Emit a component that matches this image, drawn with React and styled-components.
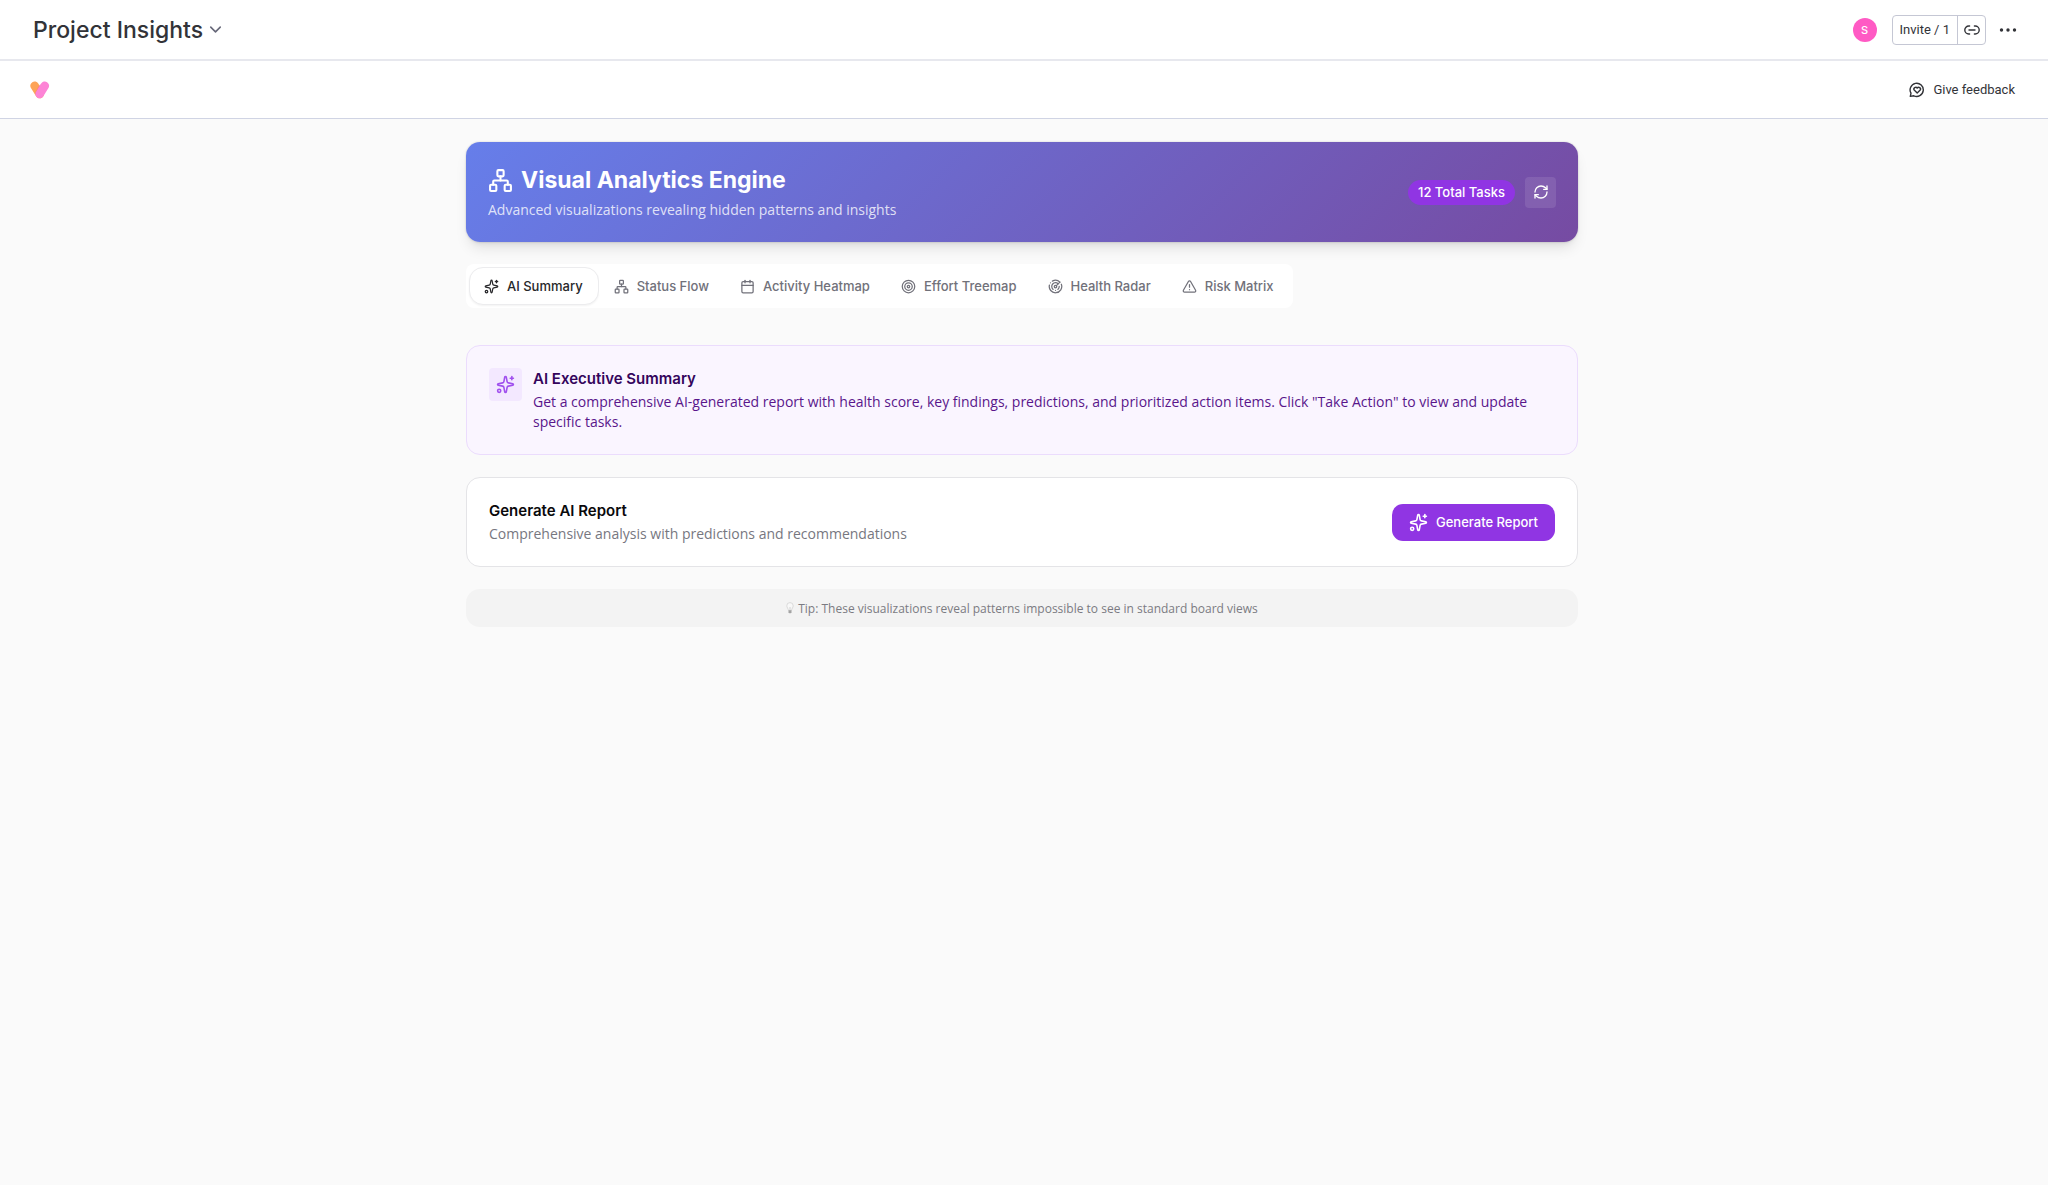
import React, { useState } from "react";
import styled, { createGlobalStyle } from "styled-components";
import {
  Calendar,
  ChevronDown,
  Network,
  Radar,
  RefreshCw,
  Sparkles,
  Target,
  TriangleAlert,
} from "lucide-react";

const bodyFont = `"Open Sans", "Noto Sans", sans-serif`;

const GlobalStyle = createGlobalStyle`
  * { box-sizing: border-box; }
  body {
    margin: 0;
    background: #fafafa;
    font-family: Inter, "Liberation Sans", sans-serif;
    color: #323338;
  }
  h1, h2, p { margin: 0; }
  button { font-family: inherit; cursor: pointer; }
`;

const Page = styled.div`
  min-height: 100vh;
`;

const TopBar = styled.header`
  display: flex;
  align-items: center;
  justify-content: space-between;
  height: 61px;
  padding: 0 31px 0 33px;
  background: #fff;
  border-bottom: 2px solid #e7e8ee;
`;

const PlainButton = styled.button`
  display: inline-flex;
  align-items: center;
  gap: ${(p) => p.$gap || 0}px;
  padding: 0;
  border: 0;
  background: none;
  color: inherit;
`;

const PageTitle = styled.span`
  font-size: 23px;
  line-height: 32px;
  font-weight: 500;
`;

const Actions = styled.div`
  display: flex;
  align-items: center;
`;

const Avatar = styled.span`
  display: grid;
  place-items: center;
  width: 24px;
  height: 24px;
  border-radius: 50%;
  background: #ff5ac4;
  color: #fff;
  font-size: 11px;
  font-weight: 500;
`;

const InviteGroup = styled.div`
  display: flex;
  height: 30px;
  margin: 0 13px 0 15px;
  border: 1px solid #c5c7d4;
  border-radius: 4px;
`;

const InviteButton = styled.button`
  display: grid;
  place-items: center;
  padding: 0 7px;
  border: 0;
  background: none;
  color: #323338;
  font-family: Roboto, sans-serif;
  font-size: 13px;

  & + & {
    width: 28px;
    padding: 0;
    border-left: 1px solid #c5c7d4;
  }
`;

const SubBar = styled.div`
  display: flex;
  align-items: center;
  justify-content: space-between;
  height: 58px;
  padding: 0 33px 0 30px;
  background: #fff;
  border-bottom: 1px solid #d0d4e4;
`;

const Feedback = styled(PlainButton)`
  font-family: Roboto, sans-serif;
  font-size: 13px;
`;

const Main = styled.main`
  padding: 23px 25px 24px 21px;
`;

const Content = styled.div`
  display: flex;
  flex-direction: column;
  gap: 22px;
  max-width: 1112px;
  margin: 0 auto;
`;

const Hero = styled.section`
  display: flex;
  align-items: center;
  justify-content: space-between;
  padding: 22px;
  border-radius: 14px;
  background: linear-gradient(135deg, #667eea 0%, #764ba2 100%);
  box-shadow: 0 9px 14px -3px rgba(0, 0, 0, 0.1), 0 4px 6px -4px rgba(0, 0, 0, 0.1), 0 0 2px rgba(0, 0, 0, 0.2);
  color: #fff;
`;

const HeroTitle = styled.h1`
  display: flex;
  align-items: center;
  gap: 8px;
  font-size: 23px;
  line-height: 32px;
  font-weight: 700;
`;

const HeroText = styled.p`
  margin-top: 4px;
  font-family: ${bodyFont};
  font-size: 14px;
  line-height: 20px;
  color: rgba(255, 255, 255, 0.8);
`;

const Badge = styled.span`
  margin-right: 10px;
  padding: 3px 10px;
  border-radius: 13px;
  background: #9035e3;
  font-size: 13px;
  line-height: 19px;
  font-weight: 500;
`;

const RefreshButton = styled.button`
  display: grid;
  place-items: center;
  width: 31px;
  height: 31px;
  padding: 0;
  border: 0;
  border-radius: 4px;
  background: rgba(255, 255, 255, 0.1);
  color: #fff;
`;

const TabList = styled.div`
  display: flex;
  align-self: flex-start;
  padding: 3px;
  border-radius: 8px;
  background: #fff;
`;

const Tab = styled.button`
  display: flex;
  align-items: center;
  gap: 8px;
  height: 38px;
  padding: 0 15px 0 14px;
  border: 1px solid ${(p) => (p.$active ? "#ececee" : "transparent")};
  border-radius: 14px;
  background: #fff;
  box-shadow: ${(p) => (p.$active ? "0 1px 2px rgba(0, 0, 0, 0.05)" : "none")};
  color: ${(p) => (p.$active ? "#27272a" : "#71717a")};
  font-size: 13px;
  font-weight: 500;
`;

const Panel = styled.div`
  display: flex;
  flex-direction: column;
  gap: 22px;
  padding-top: 15px;
`;

const Card = styled.section`
  display: flex;
  align-items: ${(p) => (p.$tinted ? "flex-start" : "center")};
  justify-content: ${(p) => (p.$tinted ? "flex-start" : "space-between")};
  gap: 11px;
  padding: 22px;
  border: 1px solid ${(p) => (p.$tinted ? "#ebdcfd" : "#e4e4e7")};
  border-radius: 14px;
  background: ${(p) => (p.$tinted ? "#faf5ff" : "#fff")};
`;

const IconTile = styled.span`
  display: grid;
  flex: none;
  place-items: center;
  width: 33px;
  height: 33px;
  border-radius: 4px;
  background: #f3e8ff;
  color: #a04fee;
`;

const CardTitle = styled.h2`
  font-size: 15px;
  line-height: 22px;
  font-weight: 600;
  color: ${(p) => (p.$tinted ? "#34055c" : "#09090b")};
`;

const CardText = styled.p`
  margin-top: 2px;
  font-family: ${bodyFont};
  font-size: 14px;
  line-height: 20px;
  color: ${(p) => (p.$tinted ? "#59168b" : "#77777f")};
`;

const PrimaryButton = styled.button`
  display: flex;
  align-items: center;
  gap: 8px;
  height: 37px;
  padding: 0 17px;
  border: 0;
  border-radius: 11px;
  background: #9035e3;
  color: #fff;
  font-size: 13px;
  font-weight: 500;
`;

const Tip = styled.p`
  display: flex;
  align-items: center;
  justify-content: center;
  gap: 4px;
  height: 38px;
  border-radius: 14px;
  background: #f3f3f3;
  color: #7b7b82;
  font-family: ${bodyFont};
  font-size: 12px;
`;

const HeartLogo = () => (
  <svg width="20" height="18" viewBox="0 0 20 18" fill="none" aria-hidden="true">
    <path d="M4.6 4.8 L9.7 13" stroke="#fda458" strokeWidth="8.6" strokeLinecap="round" />
    <path d="M14.8 4.8 L9.7 13" stroke="#fd84d6" strokeWidth="8.6" strokeLinecap="round" />
    <path d="M8.8 5 L11.1 2.6 L5.9 11 L5.4 13 L4.9 12.4 Z" fill="#f768a5" opacity="0.7" />
  </svg>
);

const LinkIcon = () => (
  <svg width="16" height="16" viewBox="0 0 16 16" fill="none" stroke="#323338" strokeWidth="1.4" strokeLinecap="round" aria-hidden="true">
    <path d="M5.6 4H4.8a4 4 0 0 0 0 8H5.6M10.4 4h.8a4 4 0 0 1 0 8H10.4M5 8h6" />
  </svg>
);

const DotsIcon = () => (
  <svg width="18" height="6" viewBox="0 0 18 6" fill="#323338" aria-hidden="true">
    <circle cx="2.5" cy="3" r="1.7" />
    <circle cx="9" cy="3" r="1.7" />
    <circle cx="15.5" cy="3" r="1.7" />
  </svg>
);

const FeedbackIcon = () => (
  <svg width="16" height="16" viewBox="0 0 16 16" fill="none" stroke="#323338" strokeWidth="1.4" strokeLinecap="round" strokeLinejoin="round" aria-hidden="true">
    <path d="M1.3 14.4 2 11.2A6.6 6.6 0 1 1 4.8 13.8Z" />
    <path d="M8.2 11 5.2 8.1a1.7 1.7 0 0 1 3-2 1.7 1.7 0 0 1 3 2Z" />
  </svg>
);

const BulbIcon = () => (
  <svg width="8" height="12" viewBox="0 0 8 12" aria-hidden="true">
    <path d="M4 .6a3.2 3.2 0 0 1 3.2 3.2C7.2 5.6 5.7 6.5 5.6 8.4H2.4C2.3 6.5.8 5.6.8 3.8A3.2 3.2 0 0 1 4 .6Z" fill="#f8f8f8" stroke="#cfcfcf" strokeWidth=".7" />
    <path d="M3.3 5 4 8 4.7 5" fill="none" stroke="#cfcfcf" strokeWidth=".5" />
    <path d="M2.5 8.3h3v1.9L4.7 11.3H3.3L2.5 10.2Z" fill="#a3a3a3" />
  </svg>
);

const TABS = [
  { label: "AI Summary", Icon: Sparkles },
  { label: "Status Flow", Icon: Network },
  { label: "Activity Heatmap", Icon: Calendar },
  { label: "Effort Treemap", Icon: Target },
  { label: "Health Radar", Icon: Radar },
  { label: "Risk Matrix", Icon: TriangleAlert },
];

export default function App() {
  const [active, setActive] = useState("AI Summary");

  return (
    <Page>
      <GlobalStyle />
      <TopBar>
        <PlainButton $gap={3}>
          <PageTitle>Project Insights</PageTitle>
          <ChevronDown size={19} color="#676879" />
        </PlainButton>
        <Actions>
          <Avatar>S</Avatar>
          <InviteGroup>
            <InviteButton>Invite / 1</InviteButton>
            <InviteButton aria-label="Copy link">
              <LinkIcon />
            </InviteButton>
          </InviteGroup>
          <PlainButton aria-label="More options">
            <DotsIcon />
          </PlainButton>
        </Actions>
      </TopBar>
      <SubBar>
        <HeartLogo />
        <Feedback $gap={8}>
          <FeedbackIcon />
          Give feedback
        </Feedback>
      </SubBar>
      <Main>
        <Content>
          <Hero>
            <div>
              <HeroTitle>
                <Network size={25} strokeWidth={2} />
                Visual Analytics Engine
              </HeroTitle>
              <HeroText>Advanced visualizations revealing hidden patterns and insights</HeroText>
            </div>
            <Actions>
              <Badge>12 Total Tasks</Badge>
              <RefreshButton aria-label="Refresh">
                <RefreshCw size={16} />
              </RefreshButton>
            </Actions>
          </Hero>
          <TabList role="tablist">
            {TABS.map(({ label, Icon }) => (
              <Tab
                key={label}
                role="tab"
                aria-selected={active === label}
                $active={active === label}
                onClick={() => setActive(label)}
              >
                <Icon size={15} />
                {label}
              </Tab>
            ))}
          </TabList>
          <Panel role="tabpanel">
            <Card $tinted>
              <IconTile>
                <Sparkles size={19} />
              </IconTile>
              <div>
                <CardTitle $tinted>AI Executive Summary</CardTitle>
                <CardText $tinted>
                  Get a comprehensive AI-generated report with health score, key findings, predictions, and
                  prioritized action items. Click "Take Action" to view and update specific tasks.
                </CardText>
              </div>
            </Card>
            <Card>
              <div>
                <CardTitle>Generate AI Report</CardTitle>
                <CardText>Comprehensive analysis with predictions and recommendations</CardText>
              </div>
              <PrimaryButton>
                <Sparkles size={19} />
                Generate Report
              </PrimaryButton>
            </Card>
            <Tip>
              <BulbIcon />
              Tip: These visualizations reveal patterns impossible to see in standard board views
            </Tip>
          </Panel>
        </Content>
      </Main>
    </Page>
  );
}
